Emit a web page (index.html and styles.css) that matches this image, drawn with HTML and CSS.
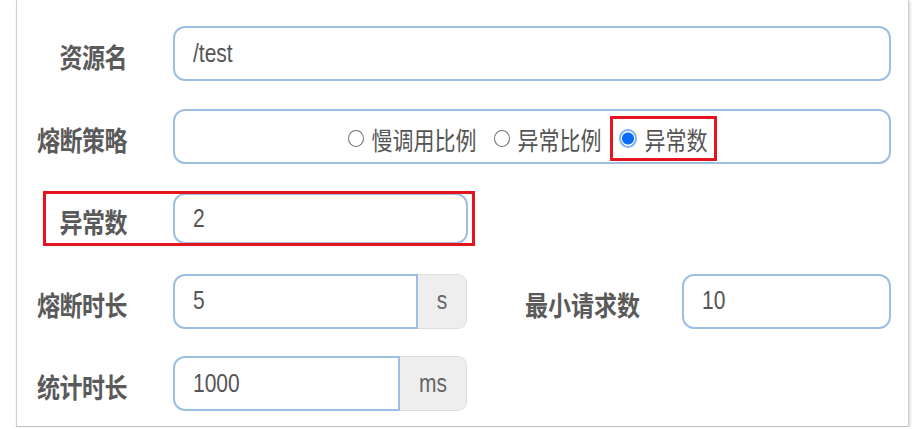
FILE: index.html
```html
<!DOCTYPE html>
<html lang="zh">
<head>
<meta charset="utf-8">
<title>熔断规则</title>
<link rel="stylesheet" href="styles.css">
</head>
<body>
<div class="panel">
  <div class="row">
    <div class="lbl"><span class="t">资源名</span></div>
    <div class="field grow"><span class="t">/test</span></div>
  </div>
  <div class="row">
    <div class="lbl"><span class="t">熔断策略</span></div>
    <div class="field grow radios">
      <div class="radio"><span class="dot"></span><span class="t">慢调用比例</span></div>
      <div class="radio"><span class="dot"></span><span class="t">异常比例</span></div>
      <div class="radio checked marked"><span class="dot"></span><span class="t">异常数</span></div>
    </div>
  </div>
  <div class="row row-mark">
    <div class="lbl"><span class="t">异常数</span></div>
    <div class="field count"><span class="t">2</span></div>
    <div class="mark"></div>
  </div>
  <div class="row">
    <div class="lbl"><span class="t">熔断时长</span></div>
    <div class="group">
      <div class="field in-group w-s"><span class="t">5</span></div>
      <div class="addon a-s"><span class="t">s</span></div>
    </div>
    <div class="lbl lbl2"><span class="t">最小请求数</span></div>
    <div class="field grow"><span class="t">10</span></div>
  </div>
  <div class="row">
    <div class="lbl"><span class="t">统计时长</span></div>
    <div class="group">
      <div class="field in-group w-ms"><span class="t">1000</span></div>
      <div class="addon a-ms"><span class="t">ms</span></div>
    </div>
  </div>
</div>
</body>
</html>
```
FILE: styles.css
```css
* { box-sizing: border-box; }
html, body { margin: 0; padding: 0; background: #fff; }
body {
  font-family: "Liberation Sans", "Noto Sans CJK SC", sans-serif;
  color: #555;
  overflow: hidden;
}
.panel {
  width: 893px;
  margin-left: 16px;
  border-left: 1px solid #cfcfcf;
  border-right: 1px solid #cfcfcf;
  border-bottom: 1px solid #bdbdbd;
  box-shadow: 1px 2px 3px rgba(0,0,0,0.18);
  padding: 26px 17px 15px 0;
  display: flex;
  flex-direction: column;
  gap: 27.5px;
}
.t { display: inline-block; transform: scaleY(1.2); }
.row {
  display: flex;
  align-items: center;
  height: 55px;
  position: relative;
}
.lbl {
  width: 110px;
  flex: none;
  margin-right: 46px;
  text-align: right;
  font-family: "Noto Sans CJK SC", sans-serif;
  font-weight: 700;
  font-size: 23px;
  color: #5a5a5a;
  padding-top: 5px;
  letter-spacing: -0.5px;
}
.field {
  height: 55px;
  border: 2px solid #9dbfe3;
  border-radius: 12px;
  display: flex;
  align-items: center;
  padding-left: 18px;
  font-size: 21px;
  color: #555;
  background: #fff;
}
.grow { flex: 1; }
.count { width: 295px; height: 51px; }
.radios {
  justify-content: center;
  padding-left: 0;
  padding-top: 4px;
  font-family: "Noto Sans CJK SC", sans-serif;
  font-size: 21px;
}
.radio {
  display: flex;
  align-items: center;
  margin-left: 17px;
  height: 39px;
}
.radio:first-child { margin-left: 0; }
.radio .t { margin-top: 2px; }
.dot {
  width: 16px;
  height: 17px;
  border: 1.5px solid #707070;
  border-radius: 50%;
  margin-right: 8px;
  background: #fff;
}
.checked .dot {
  width: 18px;
  height: 19px;
  border: 2px solid #7fb2f2;
  background: radial-gradient(circle, #0a6cf4 0 5.5px, #fff 6.5px);
}
.marked {
  margin-left: 8px;
  height: 45px;
  border: 3px solid #e5141f;
  padding: 0 6px;
}
.mark {
  position: absolute;
  left: 26px;
  top: 0;
  width: 432px;
  height: 55px;
  border: 3.5px solid #e5141f;
  pointer-events: none;
}
.group { display: flex; height: 55px; flex: none; }
.in-group { border-radius: 12px 0 0 12px; }
.w-s { width: 245px; }
.w-ms { width: 227px; }
.addon {
  background: #eeeeee;
  border: 1px solid #dedede;
  border-left: none;
  border-radius: 0 9px 9px 0;
  display: flex;
  align-items: center;
  justify-content: center;
  font-size: 21px;
  color: #666;
}
.a-s { width: 49px; }
.a-ms { width: 67px; }
.lbl2 { width: 173px; margin-right: 42px; letter-spacing: 0; }
```
